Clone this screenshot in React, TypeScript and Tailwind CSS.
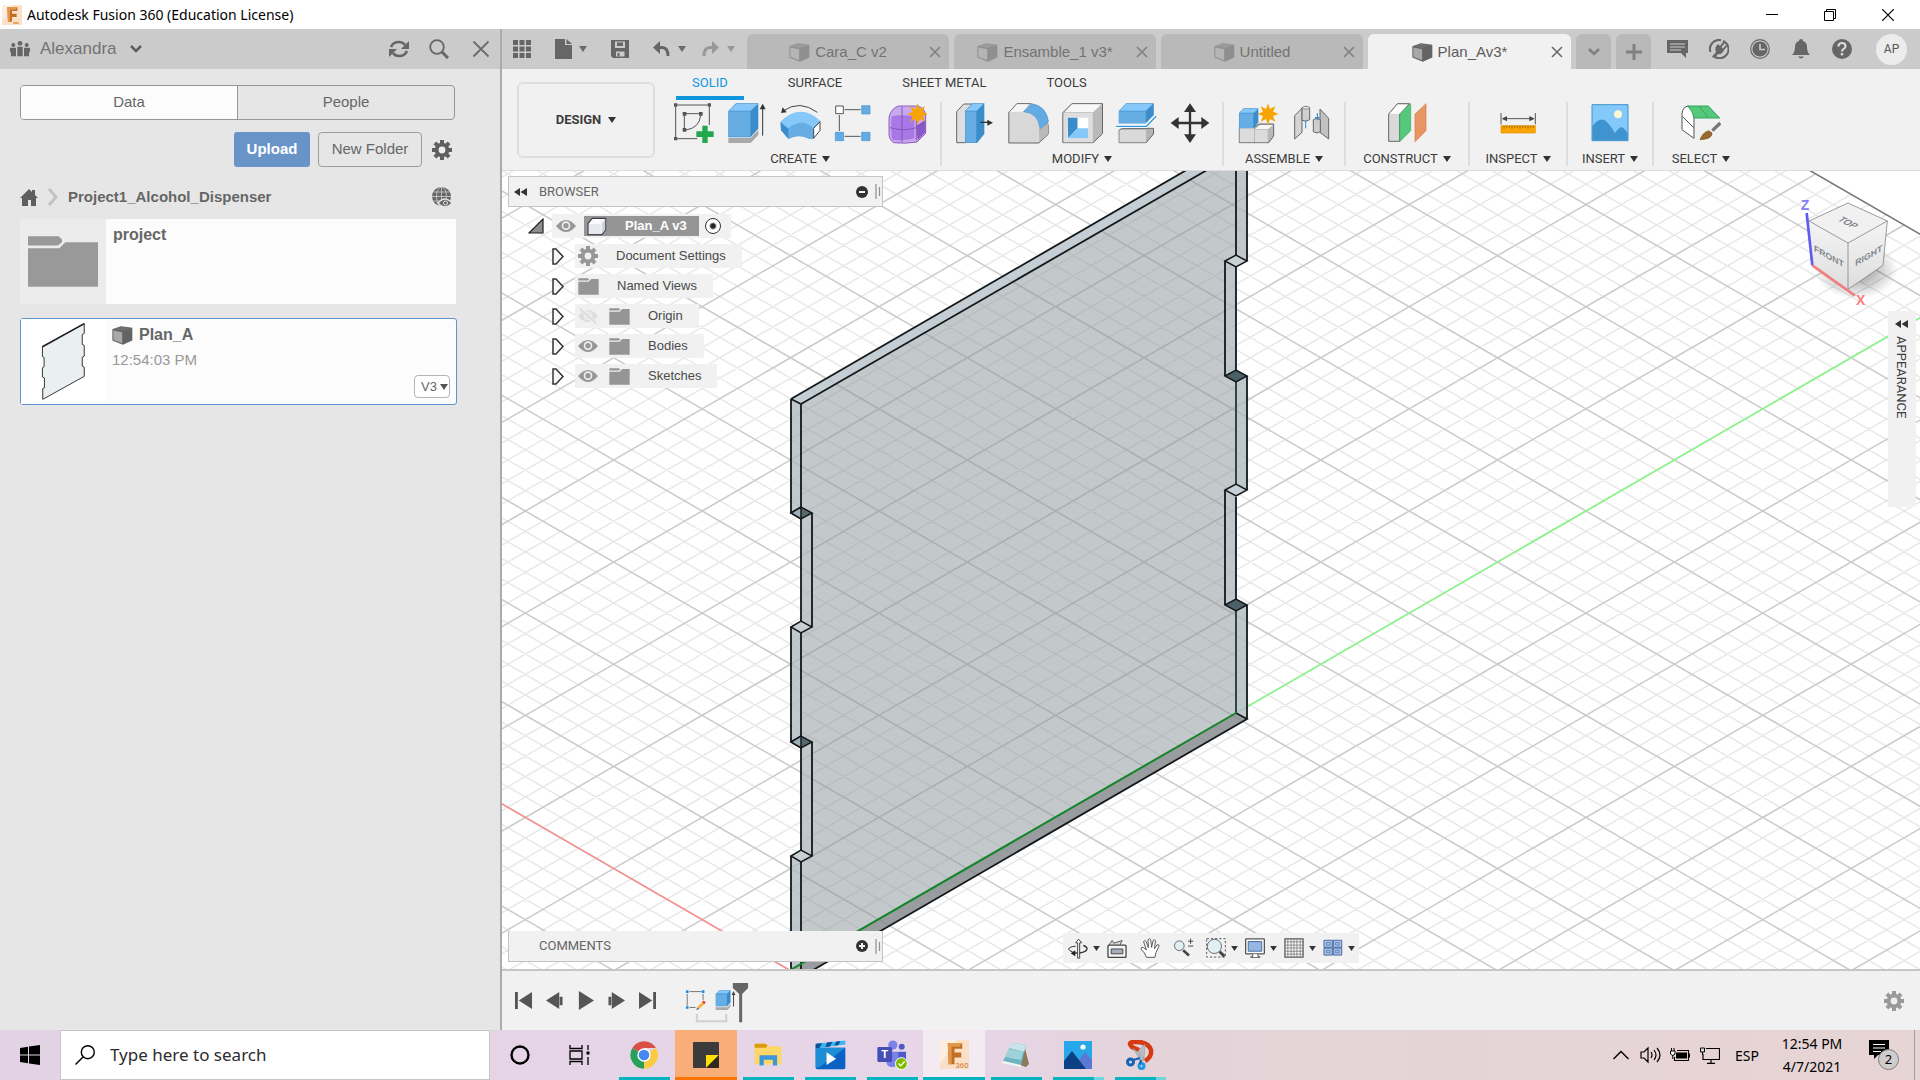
import type { ReactNode } from "react"

type IconProps = { box: string; w: number; h: number; children: ReactNode; className?: string }

function Icon({ box, w, h, children, className = "shrink-0" }: IconProps) {
    return (
        <svg viewBox={box} width={w} height={h} className={className} fill="none" aria-hidden="true">
            {children}
        </svg>
    )
}

function Caret({ color = "#333333" }: { color?: string }) {
    return (
        <Icon box="0 0 8 6" w={8} h={6}>
            <path d="M0 0h8L4 6z" fill={color} />
        </Icon>
    )
}

function Chevron({ color = "#5f5f5f" }: { color?: string }) {
    return (
        <Icon box="0 0 14 10" w={14} h={10}>
            <path d="M2 2l5 5 5-5" stroke={color} strokeWidth="2.6" />
        </Icon>
    )
}

function Cube({ dim }: { dim?: boolean }) {
    return (
        <Icon box="0 0 62 58" w={21} h={19}>
            <path d="M0 10L26 1 61 5 61 44 32 57 0 44z" fill={dim ? "#8f8f8f" : "#636363"} />
            <path d="M3 14L30 19 30 53 3 42z" fill={dim ? "#b5b5b5" : "#a8a8a8"} />
            <path d="M2 10L26 2 59 6 32 15z" fill={dim ? "#9b9b9b" : "#6e6e6e"} />
        </Icon>
    )
}

function Gear({ color, size = 20 }: { color: string; size?: number }) {
    return (
        <Icon box="-10 -10 20 20" w={size} h={size}>
            {[0, 45, 90, 135].map((a) => (
                <rect key={a} x="-2" y="-10" width="4" height="20" fill={color} transform={`rotate(${a})`} />
            ))}
            <circle r="7.3" fill={color} />
            <circle r="3.4" fill="#efefef" />
        </Icon>
    )
}

function Eye({ off }: { off?: boolean }) {
    return (
        <Icon box="0 0 60 60" w={20} h={20}>
            <path d="M0 30Q30-6 60 30Q30 66 0 30z" fill={off ? "#dcdcdc" : "#979797"} />
            <circle cx="30" cy="29" r="13" fill="#efefef" />
            <circle cx="30" cy="29" r="8" fill={off ? "#dcdcdc" : "#979797"} />
            {off && <path d="M8 8L54 54" stroke="#f0f0f0" strokeWidth="10" />}
            {off && <path d="M6 8L54 52" stroke="#d6d6d6" strokeWidth="4" />}
        </Icon>
    )
}

function Folder() {
    return (
        <Icon box="0 0 62 50" w={21} h={17}>
            <path d="M1 1h28l4 3-4 3H1zM1 11h30l8-8h22v46H1z" fill="#959595" />
        </Icon>
    )
}

function FusionLogo({ size, sub }: { size: number; sub?: boolean }) {
    return (
        <Icon box="0 0 30 30" w={size} h={size}>
            <path d="M0 0h30v30H0z" fill="#fbe0c8" />
            <path d="M0 0h18L0 24z" fill="#fdeee0" />
            <path d="M8 3h15v6h-8v4h7v5h-7v7H9z" fill="#c06f24" />
            <path d="M8 3h15l-3 4h-8v18H9z" fill="#e2974a" />
            {sub ? (
                <text x="16" y="29" fontSize="8" fill="#d07a2c" fontFamily="Roboto, sans-serif">360</text>
            ) : (
                <path d="M17 27h8" stroke="#e8a05c" strokeWidth="3" />
            )}
        </Icon>
    )
}

/* ---------- ribbon ---------- */

const createIcons = [
    {
        name: "Create Sketch",
        art: (
            <Icon box="522 305 120 126" w={40} h={42}>
                <path d="M532 314h91M527 320v90M532 415h60M628 320v54" stroke="#555" strokeWidth="3" />
                <path d="M553 345v40M558 340h40M602 345q-4 38-44 44" stroke="#555" strokeWidth="3" />
                <path d="M522 309h10v10h-10zM623 309h10v10h-10zM522 410h10v10h-10zM548 335h11v11h-11zM597 335h11v11h-11zM548 383h11v11h-11z" fill="#555" />
                <path d="M607 376h16v17h18v17h-18v18h-16v-18h-18v-17h18z" fill="#22a84c" />
            </Icon>
        ),
    },
    {
        name: "Extrude",
        art: (
            <Icon box="682 305 120 126" w={40} h={42}>
                <path d="M686 413h66l24-24v15l-23 24h-67z" fill="#a9a9a9" />
                <path d="M686 332l23-23h67v76l-24 26h-66z" fill="#3b8ccb" />
                <path d="M687 333h65v76h-65z" fill="#66ade4" />
                <path d="M688 331l22-21h65l-22 21z" fill="#86c8fa" />
                <path d="M789 406v-84" stroke="#333" strokeWidth="3" />
                <path d="M789 310l9 17h-18z" fill="#333" />
            </Icon>
        ),
    },
    {
        name: "Revolve",
        art: (
            <Icon box="843 305 123 126" w={41} h={42}>
                <path d="M852 332q50-35 103 4" stroke="#444" strokeWidth="3" />
                <path d="M846 338l5-17 12 15z" fill="#333" />
                <path d="M844 366q60-60 120-2l-22 52h-12q-30-16-61 0z" fill="#66ade4" />
                <path d="M844 364q60-58 120-2l-21 20q-38-30-75 2z" fill="#86c8fa" />
                <path d="M844 366l24 20v30l-22-26z" fill="#3b8ccb" />
                <path d="M944 384l19-20v26l-19 24z" fill="#fff" stroke="#444" strokeWidth="3" />
            </Icon>
        ),
    },
    {
        name: "Pattern",
        art: (
            <Icon box="1002 305 120 126" w={40} h={42}>
                <path d="M1034 328h48M1018 344v48M1034 408h48" stroke="#555" strokeWidth="3" />
                <path d="M1007 317h23v23h-23z" fill="#fff" stroke="#555" strokeWidth="3" />
                <path d="M1085 316h25v25h-25zM1006 396h25v25h-25zM1085 396h25v25h-25z" fill="#63ace3" stroke="#4b94cc" strokeWidth="2" />
            </Icon>
        ),
    },
    {
        name: "Create Form",
        art: (
            <Icon box="1162 305 120 126" w={40} h={42}>
                <path d="M1168 352q4-26 28-35h56q24 4 26 30v52l-26 26q-34 6-70 2-16-10-14-34z" fill="#c9a8ee" stroke="#8c5cc4" strokeWidth="3" />
                <path d="M1176 348q32-6 68 0v66q-32 10-66 4-6-30-2-70z" fill="#a878e6" />
                <path d="M1250 376l27-16v36l-23 24z" fill="#8a58c8" />
                <path d="M1207 320v106M1170 382q44 12 80 0l27-18M1250 350v70" stroke="#7c50ae" strokeWidth="2.5" />
                <path d="M1254 309l6 17 16-8-7 16 16 7-16 6 7 17-16-8-6 17-6-17-16 8 7-17-16-6 16-7-7-16 16 8z" fill="#f7a300" />
            </Icon>
        ),
    },
]

const modifyIcons = [
    {
        name: "Press Pull",
        art: (
            <Icon box="-12 305 120 126" w={40} h={42}>
                <path d="M-7 334L14 311h28l-22 22v94H-7z" fill="#dedede" stroke="#666" strokeWidth="3" />
                <path d="M18 332l22-23h36v92l-22 27H18z" fill="#3b8ccb" />
                <path d="M19 333h33v94H19z" fill="#66ade4" />
                <path d="M20 331l21-21h33l-21 21z" fill="#86c8fa" />
                <path d="M64 366h26" stroke="#333" strokeWidth="4" />
                <path d="M102 367l-17-9v18z" fill="#333" />
            </Icon>
        ),
    },
    {
        name: "Fillet",
        art: (
            <Icon box="149 305 122 126" w={41} h={42}>
                <path d="M151 337l24-27h40q48 10 54 66v26l-28 26h-90z" fill="#d8d8d8" stroke="#666" strokeWidth="3" />
                <path d="M154 335l22-23h34l-14 22z" fill="#f5f5f5" />
                <path d="M242 384l26-22v38l-26 26z" fill="#b9b9b9" />
                <path d="M195 334l24-24q44 6 51 54l-25 22q-6-50-50-52z" fill="#63ace3" stroke="#4b94cc" strokeWidth="2" />
            </Icon>
        ),
    },
    {
        name: "Shell",
        art: (
            <Icon box="310 305 122 126" w={41} h={42}>
                <path d="M312 337l27-27h92v90l-28 27h-91z" fill="#b9b9b9" stroke="#666" strokeWidth="3" />
                <path d="M314 338h88v88h-88z" fill="#dedede" />
                <path d="M317 336l23-24h88l-25 24z" fill="#f7f7f7" />
                <path d="M327 352h61v62h-61z" fill="#fff" />
                <path d="M327 352h29v32l-28 30z" fill="#3b8ccb" />
                <path d="M357 384h31v30h-60z" fill="#86c8fa" />
            </Icon>
        ),
    },
    {
        name: "Split Body",
        art: (
            <Icon box="472 305 122 126" w={41} h={42}>
                <path d="M481 389l10-5h93v17l-22 26h-81z" fill="#b5b5b5" stroke="#666" strokeWidth="3" />
                <path d="M482 389h79v37h-79z" fill="#dadada" />
                <path d="M480 332l22-23h83v35l-24 25h-81z" fill="#3b8ccb" />
                <path d="M480 333h81v36h-81z" fill="#66ade4" />
                <path d="M482 331l20-21h81l-22 21z" fill="#86c8fa" />
                <path d="M472 378h91l29-30" stroke="#fff" strokeWidth="9" />
                <path d="M472 378h91l29-30" stroke="#2f96e0" strokeWidth="4" />
            </Icon>
        ),
    },
    {
        name: "Move",
        art: (
            <Icon box="634 305 120 126" w={40} h={42}>
                <path d="M694 325v87M650 368h88" stroke="#333" strokeWidth="7" />
                <path d="M694 309l18 26h-36zM694 428l18-26h-36zM636 368l24-18v36zM752 368l-24-18v36z" fill="#333" />
            </Icon>
        ),
    },
]

const assembleIcons = [
    {
        name: "New Component",
        art: (
            <Icon box="834 305 120 126" w={40} h={42}>
                <path d="M838 380h46l13-9h44v36l-15 20h-88z" fill="#b9b9b9" stroke="#666" strokeWidth="3" />
                <path d="M839 383h43v43h-43zM885 388h38v38h-38z" fill="#dcdcdc" />
                <path d="M886 386l14-12h39l-14 12z" fill="#f7f7f7" />
                <path d="M837 338l14-14h44v42l-13 18h-45z" fill="#3b8ccb" />
                <path d="M838 339h42v44h-42z" fill="#66ade4" />
                <path d="M839 337l12-12h43l-12 12z" fill="#86c8fa" />
                <path d="M924 309l6 17 16-8-7 16 16 7-16 6 7 17-16-8-6 17-6-17-16 8 7-17-16-6 16-7-7-16 16 8z" fill="#f7a300" />
            </Icon>
        ),
    },
    {
        name: "Joint",
        art: (
            <Icon box="996 305 120 126" w={40} h={42}>
                <path d="M1007 346l22-22v72l-22 20z" fill="#d4d4d4" stroke="#666" strokeWidth="3" />
                <path d="M1029 322q12-8 23 0v36q-11 8-23 2z" fill="#cfcfcf" stroke="#666" strokeWidth="3" />
                <ellipse cx="1041" cy="322" rx="10" ry="4" fill="#efefef" stroke="#666" strokeWidth="2" />
                <path d="M1083 326l26 28v62l-26-20z" fill="#c2c2c2" stroke="#666" strokeWidth="3" />
                <path d="M1063 358q11-8 21 0v36q-10 8-21 0z" fill="#cfcfcf" stroke="#666" strokeWidth="3" />
                <path d="M1040 362v22M1075 338v22M1068 352h14" stroke="#1d86dc" strokeWidth="3" />
            </Icon>
        ),
    },
]

const constructIcons = [
    {
        name: "Offset Plane",
        art: (
            <Icon box="1282 305 120 126" w={40} h={42}>
                <path d="M1287 341l26-31h36l-29 31v82h-33z" fill="#d9d9d9" stroke="#666" strokeWidth="3" />
                <path d="M1290 340l24-27h30l-24 27z" fill="#fff" />
                <path d="M1320 341l33-31v81l-33 33z" fill="#55c87c" stroke="#36a65c" strokeWidth="2" />
                <path d="M1366 341l33-31v81l-33 33z" fill="#e99562" stroke="#d07d4b" strokeWidth="2" />
            </Icon>
        ),
    },
]

const inspectIcons = [
    {
        name: "Measure",
        art: (
            <Icon box="296 305 120 126" w={40} h={42}>
                <path d="M305 338v34M408 338v34M312 355h90" stroke="#555" strokeWidth="3" />
                <path d="M307 355l16-8v16zM406 355l-16-8v16z" fill="#444" />
                <path d="M305 376h103v22H305z" fill="#fba600" stroke="#df8f00" strokeWidth="2" />
                <path d="M314 376v9M322 376v6M330 376v6M338 376v9M346 376v6M354 376v6M362 376v9M370 376v6M378 376v6M386 376v9M394 376v6M402 376v6" stroke="#6e4a00" strokeWidth="2" />
            </Icon>
        ),
    },
]

const insertIcons = [
    {
        name: "Canvas",
        art: (
            <Icon box="572 305 120 126" w={40} h={42}>
                <path d="M578 313h108v108H578z" fill="#84c9fb" stroke="#3f93cc" strokeWidth="3" />
                <path d="M579 378q16-24 34-20 14 6 34 40 16-24 26-14l12 14v22H579z" fill="#3f94cf" />
                <circle cx="656" cy="342" r="12" fill="#fdf8cf" />
            </Icon>
        ),
    },
]

const selectIcons = [
    {
        name: "Select",
        art: (
            <Icon box="842 305 120 126" w={40} h={42}>
                <path d="M845 388v-48q2-22 20-23 16 14 16 36v61z" fill="#fff" stroke="#555" strokeWidth="3" />
                <path d="M846 348l34 34" stroke="#555" strokeWidth="3" />
                <path d="M862 317h62l34 36h-76q-6-22-20-36z" fill="#55c87c" stroke="#33a55a" strokeWidth="3" />
                <path d="M896 318l28 34" stroke="#33a55a" strokeWidth="3" />
                <path d="M936 391l24-23" stroke="#777" strokeWidth="10" />
                <path d="M899 418q8-22 26-27l10 7q2 18-36 20z" fill="#996a2b" stroke="#7c5218" strokeWidth="2" />
            </Icon>
        ),
    },
]

const ribbonGroups = [
    { label: "CREATE", icons: createIcons, width: "w-[282px]" },
    { label: "MODIFY", icons: modifyIcons, width: "w-[282px]" },
    { label: "ASSEMBLE", icons: assembleIcons, width: "w-[122px]" },
    { label: "CONSTRUCT", icons: constructIcons, width: "w-[124px]" },
    { label: "INSPECT", icons: inspectIcons, width: "w-[98px]" },
    { label: "INSERT", icons: insertIcons, width: "w-[86px]" },
    { label: "SELECT", icons: selectIcons, width: "w-[94px]" },
]

const workspaceTabs = ["SOLID", "SURFACE", "SHEET METAL", "TOOLS"]

function Ribbon() {
    return (
        <div className="flex h-[102px] shrink-0 overflow-hidden border-b border-[#dcdcdc] bg-[#f1f1f1] pl-[15px] font-[Roboto,sans-serif] text-[13px] text-[#3c3c3c]">
            <button className="mt-[13px] flex h-[76px] w-[138px] shrink-0 items-center justify-center gap-[7px] rounded-md border-2 border-[#dedede] font-bold">
                DESIGN <Caret />
            </button>
            <div className="ml-[5px] shrink-0">
                <nav className="ml-4 flex h-[31px] gap-7">
                    {workspaceTabs.map((t, i) => (
                        <button
                            key={t}
                            className={
                                i === 0
                                    ? "border-b-4 border-[#0f96dc] px-4 text-[#0f96dc]"
                                    : "border-b-4 border-transparent px-4"
                            }
                        >
                            {t}
                        </button>
                    ))}
                </nav>
                <div className="mt-[2px] flex h-16">
                    {ribbonGroups.map((g) => (
                        <div key={g.label} className={`${g.width} flex flex-col items-center border-r-2 border-[#dddddd] last:border-r-0`}>
                            <div className="flex h-[42px] gap-[13px]">
                                {g.icons.map((i) => (
                                    <button key={i.name} aria-label={i.name} title={i.name}>
                                        {i.art}
                                    </button>
                                ))}
                            </div>
                            <button className="mt-[5px] flex h-5 items-center gap-[5px]">
                                {g.label} <Caret />
                            </button>
                        </div>
                    ))}
                </div>
            </div>
        </div>
    )
}

/* ---------- document tab strip ---------- */

const docTabs = [
    { title: "Cara_C v2" },
    { title: "Ensamble_1 v3*" },
    { title: "Untitled" },
    { title: "Plan_Av3*", active: true },
]

function CloseX({ color = "#6b6b6b", size = 12 }: { color?: string; size?: number }) {
    return (
        <Icon box="0 0 12 12" w={size} h={size}>
            <path d="M1 1l10 10M11 1L1 11" stroke={color} strokeWidth={size > 12 ? 1.2 : 1.6} />
        </Icon>
    )
}

function TabStrip() {
    return (
        <div className="flex h-10 shrink-0 items-center bg-[#cbcbcb]">
            <div className="flex w-[245px] shrink-0 items-center pl-[11px]">
                <button aria-label="Show data panel">
                    <Icon box="0 0 18 18" w={18} h={18}>
                        <path d="M0 0h5v5H0zM6.5 0h5v5h-5zM13 0h5v5h-5zM0 6.5h5v5H0zM6.5 6.5h5v5h-5zM13 6.5h5v5h-5zM0 13h5v5H0zM6.5 13h5v5h-5zM13 13h5v5h-5z" fill="#666" />
                    </Icon>
                </button>
                <button aria-label="File" className="ml-6 flex items-center gap-[7px]">
                    <Icon box="0 0 17 20" w={17} h={20}>
                        <path d="M0 0h10v6h7v14H0z" fill="#666" />
                        <path d="M11.5 0L17 5h-5.5z" fill="#666" />
                    </Icon>
                    <Caret color="#6b6b6b" />
                </button>
                <button aria-label="Save" className="ml-6">
                    <Icon box="0 0 18 18" w={18} h={18}>
                        <path d="M0 0h18v18H2l-2-2z" fill="#666" />
                        <path d="M4 1.5h10V8H4zM5 11.5h8.500v5H5z" fill="#cbcbcb" />
                        <path d="M6 2.5h6v3.5H6zM6.5 13h2v3.5h-2z" fill="#666" />
                    </Icon>
                </button>
                <button aria-label="Undo" className="ml-6 flex items-center gap-2">
                    <Icon box="0 0 17 16" w={17} h={16}>
                        <path d="M0 6.5L7 0v13z" fill="#666" />
                        <path d="M5 6.5h4q6 0 6 8.5" stroke="#666" strokeWidth="3" />
                    </Icon>
                    <Caret color="#6b6b6b" />
                </button>
                <button aria-label="Redo" className="ml-4 flex items-center gap-2">
                    <Icon box="0 0 17 16" w={17} h={16}>
                        <path d="M17 6.5L10 0v13z" fill="#989898" />
                        <path d="M12 6.5H8Q2 6.5 2 15" stroke="#989898" strokeWidth="3" />
                    </Icon>
                    <Caret color="#989898" />
                </button>
            </div>
            <div className="flex h-full items-end gap-[5px]">
                {docTabs.map((t) => (
                    <div
                        key={t.title}
                        className={
                            t.active
                                ? "flex h-[35px] w-[203px] items-center rounded-t-md bg-[#f1f1f1] text-[#5c5c5c]"
                                : "flex h-[35px] w-[202px] items-center rounded-t-md bg-[#b9b9b9] text-[#737373]"
                        }
                    >
                        <button className="flex flex-1 items-center justify-center gap-[5px] pt-[2px] text-[15px]">
                            <Cube dim={!t.active} />
                            {t.title}
                        </button>
                        <button aria-label={`Close ${t.title}`} className="mr-2">
                            <CloseX color={t.active ? "#6b6b6b" : "#808080"} />
                        </button>
                    </div>
                ))}
                <button aria-label="All documents" className="flex h-[35px] w-[35px] items-center justify-center rounded-t-md bg-[#b9b9b9]">
                    <Chevron color="#808080" />
                </button>
                <button aria-label="New design" className="flex h-[35px] w-[35px] items-center justify-center rounded-t-md bg-[#b9b9b9]">
                    <Icon box="0 0 16 16" w={16} h={16}>
                        <path d="M8 0v16M0 8h16" stroke="#808080" strokeWidth="3" />
                    </Icon>
                </button>
            </div>
            <div className="ml-auto flex items-center gap-[21px] pr-[13px]">
                <button aria-label="Comments">
                    <Icon box="0 0 21 20" w={21} h={20}>
                        <path d="M0 1h21v13h-2v5l-5-5H0z" fill="#666" />
                        <path d="M3 5h15M3 8h15M3 11h11" stroke="#cbcbcb" strokeWidth="1.2" />
                    </Icon>
                </button>
                <button aria-label="Extensions">
                    <Icon box="0 0 20 20" w={20} h={20}>
                        <path d="M4 16.500A9 9 0 1 0 14 2" stroke="#666" strokeWidth="2" />
                        <path d="M12 1.200A9 9 0 0 0 1.500 13" stroke="#666" strokeWidth="2" />
                        <path d="M3 18l4-5q-2-5 2-8l2 2 3-4 1.500 1.500-3 3.500 1.500 1.500 3-3.500L18 7.500l-3 3.500q-2 5-6 4l-3 4z" fill="#666" />
                    </Icon>
                </button>
                <button aria-label="Job status">
                    <Icon box="0 0 20 20" w={20} h={20}>
                        <circle cx="10" cy="10" r="9.3" stroke="#666" strokeWidth="1.2" />
                        <circle cx="10" cy="10" r="7.6" fill="#666" />
                        <path d="M10 5v5.5h5" stroke="#cbcbcb" strokeWidth="1.6" />
                    </Icon>
                </button>
                <button aria-label="Notifications">
                    <Icon box="0 0 20 20" w={20} h={20}>
                        <path d="M10 0q2 0 2 2 4 1 4 6 0 5 3 8H1q3-3 3-8 0-5 4-6 0-2 2-2zM7 17.5h6q-3 4-6 0z" fill="#666" />
                    </Icon>
                </button>
                <button aria-label="Help">
                    <Icon box="0 0 20 20" w={20} h={20}>
                        <circle cx="10" cy="10" r="10" fill="#666" />
                        <path d="M6.5 7.5q0-3.500 3.500-3.500t3.500 3.200q0 1.600-1.800 2.700Q10 11 10 12.500" stroke="#dadada" strokeWidth="2.2" />
                        <path d="M8.8 14h2.400v2.400H8.800z" fill="#dadada" />
                    </Icon>
                </button>
                <button className="ml-[3px] size-[31px] rounded-full bg-[#ececec] font-[Roboto,sans-serif] text-xs text-[#555555]">AP</button>
            </div>
        </div>
    )
}

/* ---------- data panel ---------- */

function DataPanel() {
    return (
        <aside className="w-[502px] shrink-0 border-r-2 border-[#ababab] bg-[#e6e6e6] text-[15px] text-[#666666]">
            <div className="flex h-10 items-center bg-[#cbcbcb] pr-[10px] pl-[10px]">
                <Icon box="0 0 60 48" w={20} h={16}>
                    <circle cx="10" cy="12" r="6" fill="#666" />
                    <circle cx="30" cy="7" r="7" fill="#666" />
                    <circle cx="50" cy="12" r="6" fill="#666" />
                    <path d="M0 20h18v26H3V34H0zM22 17h16v29H22zM42 20h18v14h-3v12H42z" fill="#666" />
                </Icon>
                <button className="ml-[10px] flex items-center gap-3 text-[17px] text-[#737373]">
                    Alexandra <Chevron />
                </button>
                <div className="ml-auto flex items-center gap-5">
                    <button aria-label="Refresh">
                        <Icon box="0 0 20 18" w={20} h={18}>
                            <path d="M2 7q2-5 8-5 4 0 6 3M18 11q-2 5-8 5-4 0-6-3" stroke="#666" strokeWidth="2.6" />
                            <path d="M20 1v8h-8zM0 17V9h8z" fill="#666" />
                        </Icon>
                    </button>
                    <button aria-label="Search files">
                        <Icon box="0 0 20 20" w={20} h={20}>
                            <circle cx="8" cy="8" r="6.8" stroke="#666" strokeWidth="1.8" />
                            <path d="M13 13l6 6" stroke="#666" strokeWidth="3" />
                        </Icon>
                    </button>
                    <button aria-label="Close data panel" className="ml-[3px]">
                        <CloseX size={18} />
                    </button>
                </div>
            </div>
            <div className="pt-4 pr-[43px] pl-5">
                <div className="mr-[2px] flex h-[35px] overflow-hidden rounded border border-[#979797]">
                    <button className="flex-1 border-r border-[#979797] bg-[#fcfcfc]">Data</button>
                    <button className="flex-1">People</button>
                </div>
                <div className="mt-3 flex items-center justify-end gap-2">
                    <button className="h-[35px] w-[76px] rounded-[3px] bg-[#6894c8] font-bold text-white">Upload</button>
                    <button className="h-[35px] w-[104px] rounded border border-[#9c9c9c]">New Folder</button>
                    <button aria-label="Settings" className="mr-[5px] ml-[2px]">
                        <Gear color="#5f5f5f" />
                    </button>
                </div>
                <div className="mt-4 flex h-7 items-center">
                    <button aria-label="Home">
                        <Icon box="0 0 18 17" w={18} h={17}>
                            <path d="M9 0l3 3V1h3v5l3 3h-2v8h-5v-6H8v6H2V9H0z" fill="#5f5f5f" />
                        </Icon>
                    </button>
                    <Icon box="0 0 12 18" w={12} h={18} className="mx-[9px] shrink-0">
                        <path d="M2 1l7 8-7 8" stroke="#c2c2c2" strokeWidth="3" />
                    </Icon>
                    <a href="#project" className="font-bold">Project1_Alcohol_Dispenser</a>
                    <button aria-label="Open on web" className="mr-[5px] ml-auto">
                        <Icon box="0 0 20 20" w={20} h={20}>
                            <circle cx="9.500" cy="9.500" r="9.500" fill="#666" />
                            <path d="M0 9.500h19M1.500 5h16M1.500 14h16M9.500 0v19" stroke="#d0d0d0" strokeWidth="0.8" />
                            <ellipse cx="9.500" cy="9.500" rx="5" ry="9.500" stroke="#d0d0d0" strokeWidth="0.8" />
                            <path d="M6 16q7-8 14 0-7 8-14 0z" fill="#666" stroke="#e6e6e6" strokeWidth="1.5" />
                            <circle cx="13.500" cy="16" r="2" stroke="#e6e6e6" />
                        </Icon>
                    </button>
                </div>
                <div className="mt-2 mr-px flex h-[85px] bg-[#fcfcfc]">
                    <div className="flex w-[86px] items-center justify-center bg-[#ececec]">
                        <Icon box="0 0 210 152" w={70} h={51}>
                            <path d="M0 0h92l10 10v8l-12 10H0zM0 36h94l18-18h98v134H0z" fill="#999" />
                        </Icon>
                    </div>
                    <h2 className="ml-[7px] pt-1 text-[16px] font-bold">project</h2>
                </div>
                <div className="mt-[14px] flex h-[87px] rounded-[3px] border border-[#5f93d2] bg-[#fcfcfc]">
                    <div className="flex w-[85px] items-center justify-center bg-white">
                        <Icon box="124 965 136 240" w={45} h={79}>
                            <path d="M128 1040l127-70v30l-6 3v30l6 3v33l-6 3v27l6 3v28l-126 70v-33l5-2v-30l-6-3v-28l5-3v-28l-5-3z" fill="#eaeff1" stroke="#333" strokeWidth="3" />
                            <path d="M128 1040l127-70" stroke="#222" strokeWidth="5" />
                        </Icon>
                    </div>
                    <div className="flex-1 pt-[6px] pl-[6px]">
                        <h2 className="flex items-center gap-[6px] text-[16px] leading-5 font-bold">
                            <Cube /> Plan_A
                        </h2>
                        <p className="mt-[5px] leading-5 text-[#999999]">12:54:03 PM</p>
                    </div>
                    <div className="relative mr-[6px] mb-[6px] self-end">
                        <select aria-label="Version" className="block h-[23px] w-9 appearance-none rounded-sm border border-[#b5b5b5] bg-white pl-[6px] text-[13px]">
                            <option>V3</option>
                        </select>
                        <span className="pointer-events-none absolute top-[9px] right-[2px]">
                            <Caret color="#555555" />
                        </span>
                    </div>
                </div>
            </div>
        </aside>
    )
}

/* ---------- canvas ---------- */

const OX = 1762.7
const OY = 306.7
const SLOPE = 0.5779
const STEP = 20.43
const EDGE = -8

function downY(n: number, x: number) {
    return OY + n * STEP + SLOPE * (x - OX)
}

function upY(n: number, x: number) {
    return OY + n * STEP - SLOPE * (x - OX)
}

function gridPath(major: boolean) {
    const parts: string[] = []
    for (let n = -50; n < 90; n++) {
        if ((n % 5 === 0) !== major) continue
        if (n > EDGE) parts.push(`M400 ${downY(n, 400)}L2700 ${downY(n, 2700)}`)
        const end = OX + ((n - EDGE) * STEP) / (2 * SLOPE)
        if (end > 400) parts.push(`M400 ${upY(n, 400)}L${end} ${upY(n, end)}`)
    }
    return parts.join("")
}

const leftNotches = [513, 627, 742, 856]
const rightNotches = [261, 376, 490, 605]

function Canvas() {
    return (
        <svg className="absolute inset-0 h-full w-full" aria-hidden="true" fill="none">
            <defs>
                <linearGradient id="shade" x1="0" y1="0" x2="0" y2="1">
                    <stop offset="0" stopColor="#f4f4f4" />
                    <stop offset="1" stopColor="#dedede" />
                </linearGradient>
                <radialGradient id="drop">
                    <stop offset="0" stopColor="#000" stopOpacity="0.45" />
                    <stop offset="1" stopColor="#000" stopOpacity="0" />
                </radialGradient>
            </defs>
            <g transform="translate(-502 -171)">
                <path d={gridPath(false)} stroke="#e8e8e8" strokeWidth="1.5" />
                <path d={gridPath(true)} stroke="#cccccc" strokeWidth="1.6" />
                <path d={`M400 ${downY(EDGE, 400)}L2700 ${downY(EDGE, 2700)}`} stroke="#777" strokeWidth="1.6" />
                <path d={`M1240 ${upY(5, 1240)}L2700 ${upY(5, 2700)}`} stroke="#86f986" strokeWidth="1.6" />
                <path d={`M400 ${downY(60, 400)}L790 ${downY(60, 790)}`} stroke="#fb8c8c" strokeWidth="1.6" />

                {/* plate body */}
                <path
                    d="M791 399L1247 135V261L1236 267V370L1247 376V490L1236 497V599L1247 605V719L801 977 791 971V856L801 850V748L791 742V627L801 621V519L791 513z"
                    fill="#879297"
                    fillOpacity="0.5"
                />
                <path d="M1236 713L1247 719 801 977 791 971z" fill="#7d8083" fillOpacity="0.6" />
                <path d="M791 399L1236 141 1247 147 801 404z" fill="#c4d0d7" fillOpacity="0.7" />
                <path
                    d="M791 399L801 404V518L791 513zM801 519L812 513V627L801 621zM791 627L801 633V748L791 742zM801 748L812 742V856L801 850zM791 856L801 862V977L791 971zM1236 147H1247V261L1236 267zM1225 261L1236 267V382L1225 376zM1236 382L1247 376V490L1236 484zM1225 490L1236 497V611L1225 605zM1236 611L1247 605V719L1236 713z"
                    fill="#bccad0"
                    fillOpacity="0.5"
                />
                <path
                    d="M791 399L1247 135M801 404L1247 147M791 399L801 404M791 399V513M801 404V518M801 518V621M812 513V627M791 627V742M801 633V850M812 742V856M791 856V980M801 862V980"
                    stroke="#15181a"
                    strokeWidth="1.8"
                />
                <path
                    d="M1236 141V261M1247 135V261M1225 261V376M1236 267V382M1247 376V490M1236 382V484M1225 490V605M1236 497V713M1247 605V719M1236 713L1247 719 801 977"
                    stroke="#15181a"
                    strokeWidth="1.8"
                />
                <path d="M1236 382V484M1236 611V713" stroke="#3d6069" />
                {leftNotches.map((y, i) => (
                    <g key={y} stroke="#15181a" strokeWidth="1.5">
                        <path d={`M791 ${y}L801 ${y - 6}L812 ${y}L801 ${y + 6}z`} fill={i % 2 ? "#c6d0d5" : "#56686f"} />
                        {i % 2 === 0 && <path d={`M791 ${y}L801 ${y - 6}V${y + 6}z`} fill="#9db0b7" />}
                    </g>
                ))}
                {rightNotches.map((y, i) => (
                    <path
                        key={y}
                        d={`M1225 ${y}L1236 ${y - 6}L1247 ${y}L1236 ${y + 6}z`}
                        fill={i % 2 ? "#4c6068" : "#c6d0d5"}
                        stroke="#15181a"
                        strokeWidth="1.5"
                    />
                ))}
                <path d="M1236 713L787 972" stroke="#13852a" strokeWidth="2" />
            </g>
        </svg>
    )
}

function ViewCube() {
    return (
        <Icon box="295 80 300 330" w={100} h={110} className="absolute top-[26px] right-[22px]">
            <ellipse cx="470" cy="300" rx="125" ry="85" fill="url(#drop)" />
            <path d="M445 98L563 152 445 218 328 152z" fill="#f1f1f1" />
            <path d="M328 152L445 218V357L338 285z" fill="url(#shade)" />
            <path d="M445 218L563 152 550 285 445 357z" fill="url(#shade)" />
            <path d="M328 152L445 98 563 152 445 218zM445 218V357L550 285 563 152" stroke="#888" strokeWidth="2.5" />
            <g fill="#81868c" fontFamily="Liberation Sans, sans-serif" fontWeight="bold">
                <text transform="translate(412 150) rotate(27) skewX(-30)" fontSize="27">TOP</text>
                <text transform="translate(343 242) skewY(29)" fontSize="26">FRONT</text>
                <text transform="translate(467 288) skewY(-30)" fontSize="26">RIGHT</text>
            </g>
            <path d="M321 128L338 285" stroke="#5c5cf0" strokeWidth="8" />
            <path d="M338 285L466 376" stroke="#f08080" strokeWidth="8" />
            <text x="303" y="120" fontSize="42" fill="#8080fa" fontFamily="Liberation Sans, sans-serif" fontWeight="bold">Z</text>
            <text x="469" y="405" fontSize="42" fill="#fa8080" fontFamily="Liberation Sans, sans-serif" fontWeight="bold">X</text>
        </Icon>
    )
}

function PanelGrip() {
    return (
        <Icon box="0 0 6 15" w={6} h={15}>
            <path d="M1 0v15M4.5 3v9" stroke="#8f8f8f" strokeWidth="1.2" />
        </Icon>
    )
}

function DoubleArrow() {
    return (
        <Icon box="0 0 13 8" w={13} h={8}>
            <path d="M0 4L6 0v8zM6.5 4L13 0v8z" fill="#333" />
        </Icon>
    )
}

const treeRows = [
    { name: "Document Settings", icon: <Gear color="#979797" /> },
    { name: "Named Views", icon: <Folder /> },
    { name: "Origin", eye: <Eye off />, icon: <Folder /> },
    { name: "Bodies", eye: <Eye />, icon: <Folder /> },
    { name: "Sketches", eye: <Eye />, icon: <Folder /> },
]

function Browser() {
    return (
        <div className="absolute top-[5px] left-[6px] w-[375px] text-[13px] text-[#4a4a4a]">
            <div className="flex h-[31px] items-center border border-[#c4c4c4] bg-[#f1f1f1] pr-px pl-[5px] font-[Roboto,sans-serif] text-[#666666]">
                <button aria-label="Collapse browser">
                    <DoubleArrow />
                </button>
                <span className="ml-3">BROWSER</span>
                <button aria-label="Hide browser" className="mr-[7px] ml-auto">
                    <Icon box="0 0 12 12" w={12} h={12}>
                        <circle cx="6" cy="6" r="6" fill="#333" />
                        <path d="M3 6h6" stroke="#f1f1f1" strokeWidth="2" />
                    </Icon>
                </button>
                <PanelGrip />
            </div>
            <div className="mt-1 flex h-[30px] items-center pl-5">
                <Icon box="0 0 16 16" w={16} h={16}>
                    <path d="M1 15L15 1v14z" fill="#8d8d8d" stroke="#222" strokeWidth="1.2" />
                </Icon>
                <div className="ml-2 flex h-6 items-center bg-[#f1f1f1] px-1">
                    <Eye />
                    <div className="mr-[6px] ml-2 flex h-5 items-center bg-[#959595] pr-3 pl-[3px] font-bold text-white">
                        <Icon box="0 0 62 60" w={20} h={19}>
                            <path d="M3 20L16 4h42v36L46 56H3z" fill="#fbfbfd" stroke="#3c404c" strokeWidth="4" />
                            <path d="M46 20L57 6v34L46 54z" fill="#cfd3dc" />
                            <path d="M5 22h38v32H5z" fill="#e8e9ef" />
                        </Icon>
                        <span className="ml-[18px]">Plan_A v3</span>
                    </div>
                    <input type="radio" name="active-component" defaultChecked aria-label="Activate Plan_A v3" className="size-4 appearance-none rounded-full border border-[#333333] bg-[radial-gradient(#222222_2px,#ffffff_4px)]" />
                    <span className="w-[6px]" />
                </div>
            </div>
            {treeRows.map((r) => (
                <div key={r.name} className="flex h-[30px] items-center pl-11">
                    <button aria-label={`Expand ${r.name}`}>
                        <Icon box="0 0 12 17" w={12} h={17}>
                            <path d="M1 1h3l7 7.500L4 16H1z" fill="#f7f7f7" stroke="#333" strokeWidth="1.5" />
                        </Icon>
                    </button>
                    <div className="ml-[11px] flex h-6 items-center bg-[#f1f1f1] pr-4 pl-[3px]">
                        {r.eye && <span className="mr-[11px]">{r.eye}</span>}
                        {r.icon}
                        <span className="ml-[18px]">{r.name}</span>
                    </div>
                </div>
            ))}
        </div>
    )
}

const navTools = [
    {
        name: "Orbit",
        menu: true,
        art: (
            <Icon box="80 52 60 62" w={20} h={21}>
                <path d="M126 74q12 4 11 11-4 12-40 12" stroke="#333" strokeWidth="4" />
                <path d="M103 76q-20 2-21 9 2 6 12 8" stroke="#333" strokeWidth="3" />
                <path d="M88 97l14-9v18z" fill="#222" />
                <path d="M109 66v46h6V66h6l-9-11-9 11z" fill="#fff" stroke="#444" strokeWidth="3" />
            </Icon>
        ),
    },
    {
        name: "Look At",
        art: (
            <Icon box="203 52 62 62" w={20} h={20}>
                <path d="M206 78L219 60l5 8 26-8-7 14" fill="#ddd" stroke="#555" strokeWidth="3" />
                <rect x="206" y="74" width="56" height="38" rx="3" fill="#f5f5f5" stroke="#444" strokeWidth="4" />
                <path d="M216 86h36v15h-36z" fill="#a5adbf" stroke="#444" strokeWidth="3" />
            </Icon>
        ),
    },
    {
        name: "Pan",
        art: (
            <Icon box="301 52 62 62" w={20} h={20}>
                <path
                    d="M321 112q-4-14-17-26 0-8 8-4l9 7-9-26q4-6 8 0l7 19-1-25q5-5 8 0l3 24 5-22q5-4 7 1l-3 25 8-12q7-2 6 4-12 22-13 35z"
                    fill="#fff"
                    stroke="#555"
                    strokeWidth="3"
                />
            </Icon>
        ),
    },
    {
        name: "Zoom",
        art: (
            <Icon box="396 52 64 62" w={21} h={20}>
                <path d="M427 90l18 16" stroke="#444" strokeWidth="8" />
                <circle cx="415" cy="76" r="15" fill="#e1f0f3" stroke="#667" strokeWidth="3" />
                <path d="M442 62h16M450 54v16M442 77h16" stroke="#444" strokeWidth="3" />
            </Icon>
        ),
    },
    {
        name: "Fit",
        menu: true,
        art: (
            <Icon box="495 52 62 62" w={20} h={20}>
                <path d="M497 54h58v57h-58z" stroke="#555" strokeWidth="3" strokeDasharray="7 6" />
                <path d="M537 94l15 15" stroke="#444" strokeWidth="9" />
                <circle cx="521" cy="78" r="22" fill="#e1f0f3" stroke="#667" strokeWidth="3" />
            </Icon>
        ),
    },
    {
        name: "Display Settings",
        menu: true,
        art: (
            <Icon box="618 52 62 62" w={20} h={20}>
                <rect x="620" y="55" width="58" height="46" rx="2" fill="#fff" stroke="#555" strokeWidth="4" />
                <path d="M628 63h42v30h-42z" fill="#94b6e0" stroke="#456aa2" strokeWidth="3" />
                <path d="M642 102v8h-6v3h28v-3h-6v-8" fill="#fff" stroke="#555" strokeWidth="3" />
            </Icon>
        ),
    },
    {
        name: "Grid and Snaps",
        menu: true,
        art: (
            <Icon box="735 52 62 62" w={20} h={20}>
                <path d="M738 55h56v56h-56z" fill="#fff" stroke="#555" strokeWidth="4" />
                <path d="M747 55v56M757 55v56M766 55v56M775 55v56M785 55v56M738 64h56M738 74h56M738 83h56M738 93h56M738 102h56" stroke="#888" strokeWidth="3" />
            </Icon>
        ),
    },
    {
        name: "Viewports",
        menu: true,
        art: (
            <Icon box="850 52 62 62" w={20} h={20}>
                <path d="M853 59h26v22h-26zM882 59h26v22h-26zM853 83h26v22h-26zM882 83h26v22h-26z" fill="#a8c2e8" stroke="#47699f" strokeWidth="3" />
                <path d="M861 66h11v8h-11zM889 66h11v8h-11zM861 90h11v8h-11zM889 90h11v8h-11z" stroke="#47699f" strokeWidth="2" />
            </Icon>
        ),
    },
]

function Viewport() {
    return (
        <main className="relative min-h-0 flex-1 overflow-hidden bg-white">
            <Canvas />
            <ViewCube />
            <Browser />
            <div className="absolute bottom-[7px] left-[6px] flex h-[31px] w-[375px] items-center border border-t-0 border-[#c4c4c4] bg-[#f1f1f1] pr-px pl-[30px] font-[Roboto,sans-serif] text-[13px] text-[#666666]">
                COMMENTS
                <button aria-label="Show comments" className="mr-[7px] ml-auto">
                    <Icon box="0 0 12 12" w={12} h={12}>
                        <circle cx="6" cy="6" r="6" fill="#333" />
                        <path d="M3 6h6M6 3v6" stroke="#f1f1f1" strokeWidth="2" />
                    </Icon>
                </button>
                <PanelGrip />
            </div>
            <div className="absolute bottom-[6px] left-[561px] flex h-[30px] w-[296px] bg-[#f1f1f1] pl-[5px]">
                {navTools.map((t) => (
                    <button
                        key={t.name}
                        aria-label={t.name}
                        className={t.menu ? "flex w-[39px] shrink-0 items-center gap-[5px]" : "flex w-[33px] shrink-0 items-center"}
                    >
                        {t.art}
                        {t.menu && (
                            <Icon box="0 0 8 6" w={7} h={5}>
                                <path d="M0 0h8L4 6z" fill="#333" />
                            </Icon>
                        )}
                    </button>
                ))}
            </div>
            <button className="absolute top-[140px] right-1 flex h-[196px] w-7 flex-col items-center gap-2 bg-[#f1f1f1] pt-[9px] pr-[2px] font-[Roboto,sans-serif] text-[13px] text-[#3c3c3c]">
                <DoubleArrow />
                <span className="[writing-mode:vertical-rl]">APPEARANCE</span>
            </button>
        </main>
    )
}

/* ---------- timeline ---------- */

const playback = [
    { name: "Go to start", d: "M0 1h3v18H0zM4 10L18 1v18z" },
    { name: "Step back", d: "M0 10L14 1v18zM14.5 6h3v9h-3z" },
    { name: "Play", d: "M2 0l16 10L2 20z" },
    { name: "Step forward", d: "M18 10L4 1v18zM.5 6h3v9h-3z" },
    { name: "Go to end", d: "M15 1h3v18h-3zM14 10L0 1v18z" },
]

function Timeline() {
    return (
        <footer className="flex h-[61px] shrink-0 items-center border-t-2 border-[#c6c6c6] bg-[#f1f1f1] pr-4 pl-[13px]">
            <div className="flex gap-[14px]">
                {playback.map((p) => (
                    <button key={p.name} aria-label={p.name}>
                        <Icon box="0 0 18 20" w={17} h={19}>
                            <path d={p.d} fill="#555" />
                        </Icon>
                    </button>
                ))}
            </div>
            <button aria-label="Timeline features" className="ml-7 pt-1">
                <Icon box="550 240 195 130" w={65} h={43}>
                    <path d="M566 272h36M559 279v36M607 279v18M566 320h18" stroke="#777" strokeWidth="3" />
                    <path d="M555 268h8v8h-8zM603 268h8v8h-8zM555 316h8v8h-8z" fill="#1f8fe5" />
                    <path d="M593 321l16-16" stroke="#f5b63f" strokeWidth="9" />
                    <path d="M607 307l5-5" stroke="#e4384b" strokeWidth="9" />
                    <path d="M586 328l4-9 6 6z" fill="#666" />
                    <path d="M645 319h36l9-10v8l-9 11h-36z" fill="#aaa" />
                    <path d="M645 279l11-11h34v36l-10 12h-35z" fill="#3b8ccb" />
                    <path d="M646 280h33v36h-33z" fill="#66ade4" />
                    <path d="M647 278l9-9h33l-9 9z" fill="#86c8fa" />
                    <path d="M699 317v-36" stroke="#444" strokeWidth="3" />
                    <path d="M699 270l6 12h-12z" fill="#444" />
                    <path d="M588 340v22h89v-22" stroke="#cfcfcf" strokeWidth="6" />
                    <path d="M697 246h46v15l-18 18v86h-9v-86l-19-18z" fill="#666" />
                </Icon>
            </button>
            <button aria-label="Timeline settings" className="ml-auto">
                <Gear color="#999999" />
            </button>
        </footer>
    )
}

/* ---------- taskbar ---------- */

const apps = [
    {
        name: "Chrome",
        art: (
            <Icon box="389 422 84 84" w={28} h={28}>
                <path d="M431 464L396 443A41 41 0 0 0 431 505z" fill="#26a05a" />
                <path d="M431 464L431 505A41 41 0 0 0 467 443z" fill="#fccb44" />
                <path d="M396 443A41 41 0 0 1 467 443H431v21z" fill="#d94f43" />
                <circle cx="431" cy="464" r="20" fill="#fff" />
                <circle cx="431" cy="464" r="16" fill="#4688f1" />
            </Icon>
        ),
    },
    {
        name: "Sticky Notes",
        cell: "bg-[#f9ad79]",
        bar: "w-full bg-[#ff7300]",
        art: (
            <Icon box="0 0 26 26" w={26} h={26}>
                <path d="M1 0h24q1 0 1 1v24q0 1-1 1H1q-1 0-1-1V1q0-1 1-1z" fill="#3b3b3b" />
                <path d="M13 13h13L13 26z" fill="#ffdf05" />
                <path d="M26 13v13H13z" fill="#2e2a1c" />
            </Icon>
        ),
    },
    {
        name: "File Explorer",
        art: (
            <Icon box="760 426 86 74" w={28} h={25}>
                <path d="M762 430h34l6 8h42v56h-82z" fill="#fdd868" />
                <path d="M762 430h34l6 6-6 6h-34z" fill="#dd9a08" />
                <path d="M777 465h54v32h-13v-18h-28v18h-13z" fill="#3a97dc" />
            </Icon>
        ),
    },
    {
        name: "Movies & TV",
        art: (
            <Icon box="943 422 94 90" w={31} h={30}>
                <path d="M945 445h90v60q0 5-5 5h-80q-5 0-5-5z" fill="#0b62c4" />
                <path d="M945 445h90l-80 60h-10z" fill="#1d8ed6" />
                <path d="M945 433l90-10v12l-90 12z" fill="#35b9f3" />
                <path d="M945 433l20-2-8 14-12 2zM980 429l16-2-8 14-14 2zM1008 426l12-1-6 12-12 2z" fill="#0e4f94" />
                <path d="M978 459l29 19-29 19z" fill="#fff" />
            </Icon>
        ),
    },
    {
        name: "Teams",
        art: (
            <Icon box="1130 422 94 90" w={31} h={30}>
                <circle cx="1178" cy="437" r="14" fill="#7b83eb" />
                <circle cx="1205" cy="442" r="9" fill="#5059c9" />
                <path d="M1194 457h24v26q0 16-16 16h-8z" fill="#5059c9" />
                <path d="M1158 457h36v30q-2 17-18 17t-18-17z" fill="#7b83eb" />
                <rect x="1131" y="443" width="45" height="45" rx="4" fill="#464eb8" />
                <text x="1143" y="477" fontSize="34" fontWeight="bold" fill="#fff" fontFamily="Liberation Sans, sans-serif">T</text>
                <circle cx="1204" cy="493" r="18" fill="#7fba00" stroke="#fff" strokeWidth="3" />
                <path d="M1195 493l7 7 12-14" stroke="#fff" strokeWidth="4" />
            </Icon>
        ),
    },
    { name: "Fusion 360", cell: "bg-[#f4ebf2]", bar: "w-full bg-[#04b5c1]", art: <FusionLogo size={29} sub /> },
    {
        name: "Notepad",
        art: (
            <Icon box="0 0 28 26" w={28} h={26}>
                <path d="M22 2l5 20-3 3-6-2z" fill="#8a7a55" />
                <path d="M10 1l14 2-5 21L1 19z" fill="#6fb4c2" />
                <path d="M10 1l14 2-2 7L7 6z" fill="#c8e6ea" />
                <path d="M7 7l14 3-2 8L3 15z" fill="#9fd2da" />
                <path d="M1 19l18 4v2L0 21z" fill="#f2f6f6" />
            </Icon>
        ),
    },
    {
        name: "Photos",
        bar: "w-[51px] bg-[linear-gradient(90deg,#04b5c1_41px,#6fd6dc_41px)]",
        art: (
            <Icon box="0 0 28 28" w={28} h={28}>
                <path d="M0 0h28v28H0z" fill="#28a8e8" />
                <path d="M14 20l7-9 7 8v9H14z" fill="#5a78d4" />
                <path d="M0 20l8-10 14 18H0z" fill="#0c3f83" />
                <circle cx="19" cy="6" r="2.6" fill="#fff" />
            </Icon>
        ),
    },
    {
        name: "Snipping Tool",
        bar: "w-[51px] bg-[linear-gradient(90deg,#04b5c1_41px,#6fd6dc_41px)]",
        art: (
            <Icon box="0 0 28 30" w={28} h={30}>
                <path d="M13 10L6 7q-5-5 2-5 14-1 17 8 1 7-6 11" stroke="#d63a12" strokeWidth="4.500" />
                <path d="M19 4l-1 16-4 3-1-13zM7 8l11 10-3 4z" fill="#b9bcc0" stroke="#8f9296" strokeWidth=".5" />
                <circle cx="4.500" cy="22" r="3" stroke="#1462b4" strokeWidth="3" />
                <circle cx="15.500" cy="26" r="2.500" stroke="#1c9ae6" strokeWidth="3" />
                <path d="M7 20l7-2M14 24l1-4" stroke="#1462b4" strokeWidth="2" />
            </Icon>
        ),
    },
]

function Taskbar() {
    return (
        <div className="flex h-[50px] shrink-0 items-center bg-[linear-gradient(90deg,#e2d3e4,#e7d5e8_50%,#e4d4d9_60%,#e7d4d4)] font-[Noto_Sans,sans-serif] text-black">
            <button aria-label="Start" className="flex h-full w-[60px] items-center justify-center">
                <Icon box="0 0 20 20" w={20} h={20}>
                    <path d="M0 3l8-1.200V9.500H0zM9 1.600L20 0v9.500H9zM0 10.500h8v7.700L0 17zM9 10.500h11V20L9 18.400z" fill="#000" />
                </Icon>
            </button>
            <label className="flex h-full w-[430px] items-center gap-[15px] border border-[#c6c6c6] bg-white pl-[14px]">
                <Icon box="0 0 20 20" w={20} h={20}>
                    <circle cx="12.800" cy="7.200" r="6.500" stroke="#000" strokeWidth="1.4" />
                    <path d="M8 12l-7.500 7.500" stroke="#000" strokeWidth="1.4" />
                </Icon>
                <input aria-label="Type here to search" placeholder="Type here to search" className="min-w-0 flex-1 text-[17px] outline-none placeholder:text-[#2c2c2c]" />
            </label>
            <button aria-label="Cortana" className="flex h-full w-[60px] items-center justify-center">
                <Icon box="0 0 20 20" w={20} h={20}>
                    <circle cx="10" cy="10" r="8.5" stroke="#000" strokeWidth="2.4" />
                </Icon>
            </button>
            <button aria-label="Task View" className="flex h-full w-[63px] items-center justify-center pr-1">
                <Icon box="0 0 21 20" w={21} h={20}>
                    <path d="M1 0v3.500h12V0M1 20v-3.500h12V20M1 6h12v8H1zM19 0v5M19 12v8" stroke="#000" strokeWidth="1.3" />
                    <path d="M17.500 6.500h3v3h-3z" fill="#000" />
                </Icon>
            </button>
            {apps.map((a) => (
                <button key={a.name} aria-label={a.name} className={`flex h-full w-[62px] flex-col items-center ${a.cell ?? ""}`}>
                    <span className="flex flex-1 items-center pt-[2px]">{a.art}</span>
                    <span className={`h-[3px] ${a.bar ?? "w-[51px] bg-[#04b5c1]"}`} />
                </button>
            ))}
            <div className="ml-auto flex h-full items-center text-[14px]">
                <button aria-label="Show hidden icons">
                    <Icon box="0 0 16 10" w={16} h={10}>
                        <path d="M.5 9L8 1.500 15.500 9" stroke="#000" strokeWidth="1.4" />
                    </Icon>
                </button>
                <button aria-label="Volume" className="ml-[11px]">
                    <Icon box="0 0 21 18" w={21} h={18}>
                        <path d="M1 6h3l4-4v14l-4-4H1zM11 6q2 3 0 6M14 4q4 5 0 10M17 2q6 7 0 14" stroke="#000" strokeWidth="1.2" />
                    </Icon>
                </button>
                <button aria-label="Battery" className="ml-[9px]">
                    <Icon box="0 0 20 14" w={20} h={14}>
                        <path d="M6 4.500h11v6H6z" fill="#000" />
                        <path d="M7 2.500h11.500v10H4.500V9M19.500 5.500v4" stroke="#000" strokeWidth="1.1" />
                        <path d="M.5 3h4.500v3q-2.200 3-4.500 0zM1.500 0v3M4 0v3M2.800 7v4" fill="#fff" stroke="#000" />
                    </Icon>
                </button>
                <button aria-label="Network" className="ml-[10px]">
                    <Icon box="0 0 20 17" w={20} h={17}>
                        <path d="M6 1.500h13.500v11H3V7M11 13v3M7 16.300h8" stroke="#000" strokeWidth="1.2" />
                        <path d="M.5 1h4v4h-4zM2.500 5v3" stroke="#000" />
                    </Icon>
                </button>
                <button className="ml-[15px]">ESP</button>
                <button className="ml-5 w-[66px] text-center leading-[23px]">
                    12:54 PM
                    <br />
                    4/7/2021
                </button>
                <button aria-label="Action center" className="relative ml-6 size-[30px]">
                    <Icon box="0 0 20 19" w={20} h={19} className="absolute top-0 left-0">
                        <path d="M0 0h20v15H9l-4 4v-4H0z" fill="#000" />
                        <path d="M4 4.500h12M4 8h12M4 11.500h8" stroke="#fff" />
                    </Icon>
                    <span className="absolute right-0 bottom-0 size-[21px] rounded-full border border-[#7c7c7c] bg-[#cfcccc] text-[13px] leading-[19px]">2</span>
                </button>
                <span className="ml-[15px] h-full w-[6px] border-l border-[#a99d9d]" />
            </div>
        </div>
    )
}

export default function App() {
    return (
        <div className="flex h-screen flex-col overflow-hidden bg-white font-[Liberation_Sans,Arial,sans-serif]">
            <header className="flex h-[29px] shrink-0 items-center pl-[2px] text-black">
                <FusionLogo size={20} />
                <h1 className="ml-[5px] font-[Noto_Sans,sans-serif] text-[14px]">Autodesk Fusion 360 (Education License)</h1>
                <div className="ml-auto flex h-full">
                    <button aria-label="Minimize" className="flex w-[58px] items-center justify-center">
                        <Icon box="0 0 12 12" w={12} h={12}>
                            <path d="M0 5.500h12" stroke="#000" />
                        </Icon>
                    </button>
                    <button aria-label="Restore" className="flex w-[58px] items-center justify-center">
                        <Icon box="0 0 12 12" w={12} h={12}>
                            <path d="M.5 2.500h9v9h-9zM2.500 2.500v-2h9v9h-2" stroke="#000" />
                        </Icon>
                    </button>
                    <button aria-label="Close" className="mr-[3px] flex w-[58px] items-center justify-center">
                        <Icon box="0 0 12 12" w={12} h={12}>
                            <path d="M0 0l12 12M12 0L0 12" stroke="#000" strokeWidth="1.2" />
                        </Icon>
                    </button>
                </div>
            </header>
            <div className="flex min-h-0 flex-1">
                <DataPanel />
                <div className="flex min-w-0 flex-1 flex-col">
                    <TabStrip />
                    <Ribbon />
                    <Viewport />
                    <Timeline />
                </div>
            </div>
            <Taskbar />
        </div>
    )
}
